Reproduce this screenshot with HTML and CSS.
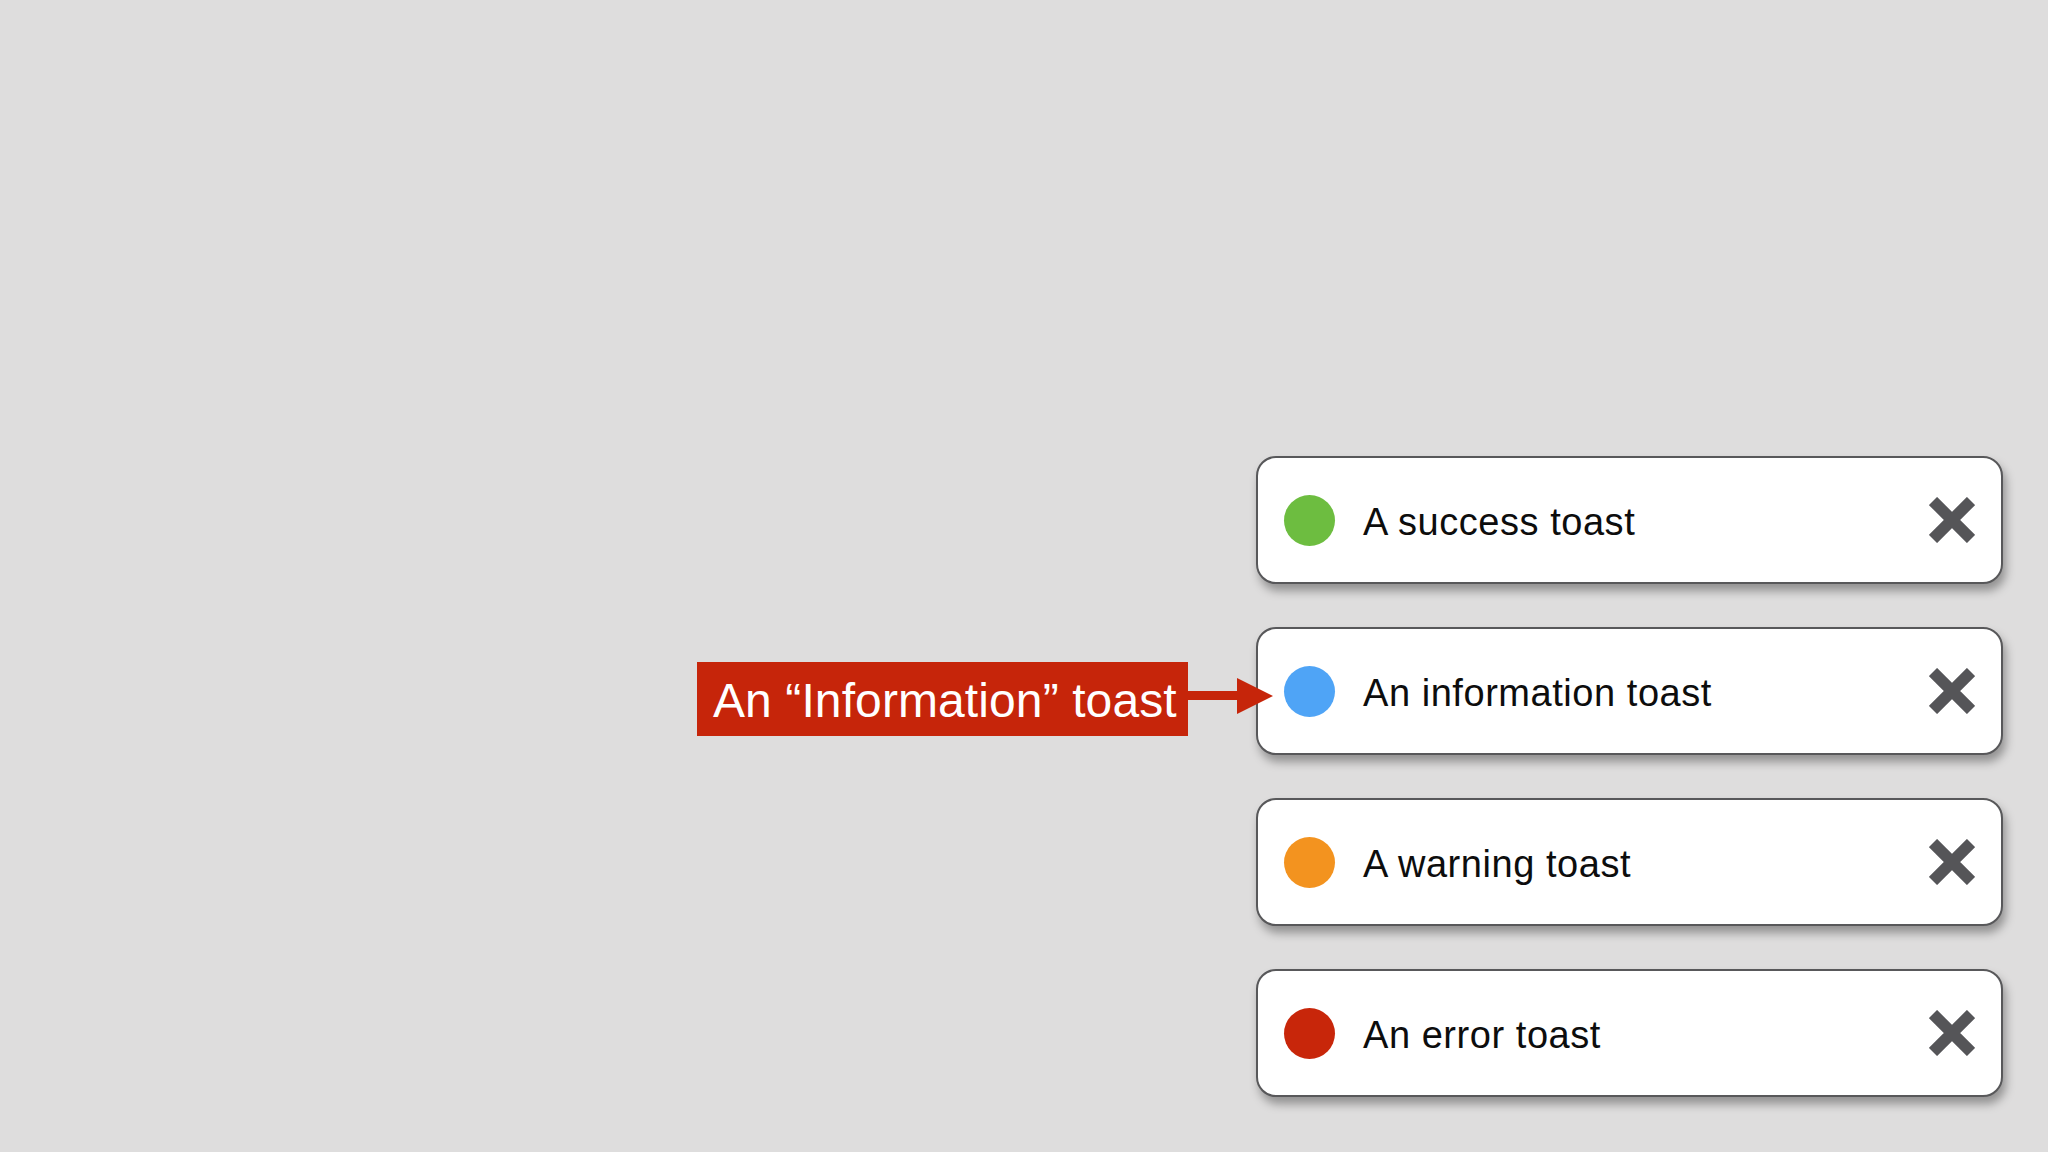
FILE: index.html
```html
<!DOCTYPE html>
<html>
<head>
<meta charset="utf-8">
<link rel="stylesheet" href="styles.css">
</head>
<body>
<main class="stage">
  <section class="toasts">
    <div class="toast">
      <span class="dot dot-success"></span>
      <span class="msg">A success toast</span>
      <svg class="close" viewBox="0 0 46 46" width="46" height="46"><path d="M4 4L42 42M42 4L4 42" /></svg>
    </div>
    <div class="toast">
      <div class="callout">
        <div class="callout-label">An “Information” toast</div>
        <svg class="callout-arrow" viewBox="0 0 85 36" width="85" height="36"><rect x="0" y="13" width="52" height="9" /><path d="M49 0L85 18L49 36Z" /></svg>
      </div>
      <span class="dot dot-info"></span>
      <span class="msg">An information toast</span>
      <svg class="close" viewBox="0 0 46 46" width="46" height="46"><path d="M4 4L42 42M42 4L4 42" /></svg>
    </div>
    <div class="toast">
      <span class="dot dot-warning"></span>
      <span class="msg">A warning toast</span>
      <svg class="close" viewBox="0 0 46 46" width="46" height="46"><path d="M4 4L42 42M42 4L4 42" /></svg>
    </div>
    <div class="toast">
      <span class="dot dot-error"></span>
      <span class="msg">An error toast</span>
      <svg class="close" viewBox="0 0 46 46" width="46" height="46"><path d="M4 4L42 42M42 4L4 42" /></svg>
    </div>
  </section>
</main>
</body>
</html>
```

FILE: styles.css
```css
html, body {
  margin: 0;
  padding: 0;
  background: #dedddd;
}

.stage {
  width: 2048px;
  height: 1152px;
  display: flex;
  justify-content: flex-end;
  box-sizing: border-box;
  padding: 456px 45px 0 0;
  font-family: "Liberation Sans", Arial, Helvetica, sans-serif;
}

.toasts {
  display: flex;
  flex-direction: column;
  gap: 43px;
  width: 747px;
}

.toast {
  position: relative;
  box-sizing: border-box;
  height: 128px;
  display: flex;
  align-items: center;
  padding: 0 26px;
  background: #ffffff;
  border: 2px solid #58585a;
  border-radius: 20px;
  box-shadow: 3px 7px 10px rgba(0, 0, 0, 0.34);
}

.dot {
  width: 51px;
  height: 51px;
  border-radius: 50%;
  flex: none;
}

.dot-success { background: #6dbd40; }
.dot-info { background: #4fa4f6; }
.dot-warning { background: #f3931f; }
.dot-error { background: #c8260a; }

.msg {
  flex: 1;
  margin-left: 28px;
  font-size: 38px;
  color: #0d0d0d;
  letter-spacing: 0.55px;
  padding-top: 5px;
}

.close {
  flex: none;
  display: block;
}

.close path {
  stroke: #555558;
  stroke-width: 11.5;
  stroke-linecap: butt;
  fill: none;
}

.callout {
  position: absolute;
  right: calc(100% - 15px);
  top: 33px;
  display: flex;
  align-items: center;
}

.callout-label {
  box-sizing: border-box;
  width: 491px;
  height: 74px;
  background: #c6250a;
  color: #ffffff;
  font-size: 48px;
  line-height: 71px;
  padding-top: 3px;
  padding-left: 16px;
  white-space: nowrap;
  letter-spacing: 0.1px;
}

.callout-arrow {
  display: block;
  margin-top: -6px;
  fill: #c6250a;
}
```
